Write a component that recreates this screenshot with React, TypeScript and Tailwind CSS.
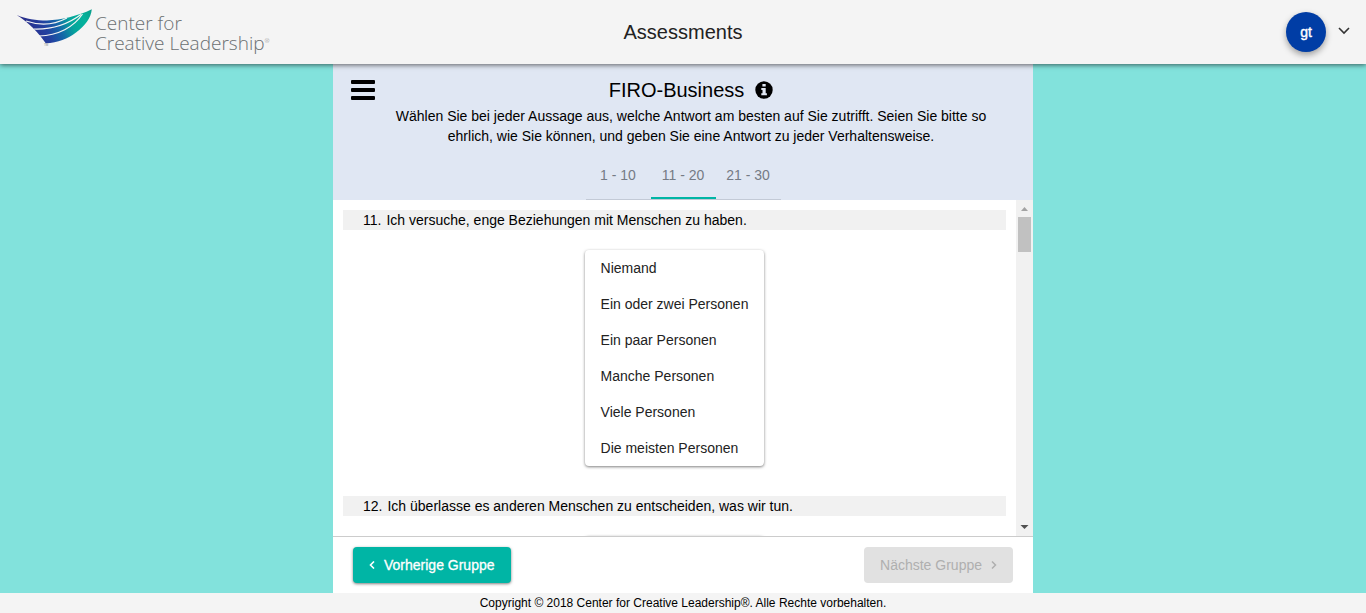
import { useState } from "react";

const groups = ["1 - 10", "11 - 20", "21 - 30"];

const options = [
  "Niemand",
  "Ein oder zwei Personen",
  "Ein paar Personen",
  "Manche Personen",
  "Viele Personen",
  "Die meisten Personen",
];

const questions = [
  { id: 11, text: "Ich versuche, enge Beziehungen mit Menschen zu haben." },
  { id: 12, text: "Ich überlasse es anderen Menschen zu entscheiden, was wir tun." },
];

function Logo() {
  return (
    <a href="#" className="flex items-start gap-[3px] text-[#6b7072]">
      <svg width="76" height="38" viewBox="0 0 76 38" aria-hidden="true" className="overflow-visible">
        <defs>
          <linearGradient id="wing" x1="0" y1="0.2" x2="1" y2="0">
            <stop offset="0" stopColor="#2b2a86" />
            <stop offset="0.3" stopColor="#2340a0" />
            <stop offset="0.48" stopColor="#1467a8" />
            <stop offset="0.66" stopColor="#05a59c" />
            <stop offset="0.85" stopColor="#04b39c" />
            <stop offset="1" stopColor="#0a9c8a" />
          </linearGradient>
        </defs>
        <path
          fill="url(#wing)"
          d="M0.700 6 C10 10 20 11.500 31 11.500 C45 11 62 7 75.800 0.300 C75 9 69 17 60 23.500 C52 29.500 42 33.800 29.700 34.300 C23 24 13 14 0.700 6Z"
        />
        <g fill="none" stroke="#f4f4f4">
          <path strokeWidth="1.100" d="M10 12 C23 16.500 38 16 51 9" />
          <path strokeWidth="1.200" d="M18 20 C35 20.500 51 16 65 5.500" />
          <path strokeWidth="1.200" d="M23 27 C42 26.500 58 18 66.500 5" />
        </g>
        <text x="28" y="37" fontSize="3" fill="#8a8a8a" fontFamily="Liberation Sans, sans-serif">TM</text>
      </svg>
      <span className="flex flex-col pt-1 font-['Open_Sans',sans-serif] text-[19px] leading-5 font-light">
        <span>Center for</span>
        <span className="flex">
          Creative Leadership<span className="text-[6px] leading-4">®</span>
        </span>
      </span>
    </a>
  );
}

function InfoIcon() {
  return (
    <svg width="18" height="18" viewBox="0 0 18 18" aria-hidden="true">
      <circle cx="9" cy="9" r="8.700" fill="#000" />
      <path fill="#e0e7f3" d="M7.400 3h3.300v2.500H7.400zM6.300 7h4.400v5.300h1.200v2H6.300v-2h1.200V9H6.300z" />
    </svg>
  );
}

function ScrollRail() {
  return (
    <div aria-hidden="true" className="flex w-[17px] shrink-0 flex-col items-center bg-[#f1f1f1]">
      <svg width="17" height="17" viewBox="0 0 17 17">
        <path d="M5 11h7L8.500 7z" fill="#a3a3a3" />
      </svg>
      <div className="h-[35px] w-[13px] bg-[#c1c1c1]" />
      <svg width="17" height="17" viewBox="0 0 17 17" className="mt-auto">
        <path d="M4.500 6h8L8.500 10z" fill="#505050" />
      </svg>
    </div>
  );
}

export default function App() {
  const [group, setGroup] = useState(1);
  const [answers, setAnswers] = useState<Record<number, number>>({});

  return (
    <div className="flex h-screen min-h-96 flex-col bg-[#82e2dc] font-['Liberation_Sans',Arial,sans-serif] text-sm leading-5 text-black">
      <header className="relative z-10 grid h-16 shrink-0 grid-cols-3 bg-[#f4f4f4] shadow-[0_1px_5px_rgba(0,0,0,0.6)]">
        <div className="pt-[9px] pl-4">
          <Logo />
        </div>
        <h1 className="self-center text-center text-xl text-[#222]">Assessments</h1>
        <div className="flex items-center justify-end gap-3 pr-4">
          <span className="flex size-10 items-center justify-center rounded-full bg-[#003da5] text-sm text-white shadow-[0_3px_6px_rgba(0,0,0,0.35)] [-webkit-text-stroke:0.4px_white]">
            gt
          </span>
          <button type="button" aria-label="Konto" className="pb-0.5">
            <svg width="12" height="8" viewBox="0 0 12 8" fill="none" stroke="#333" strokeWidth="1.600" aria-hidden="true">
              <path d="M1 1l5 5 5-5" />
            </svg>
          </button>
        </div>
      </header>

      <main className="mx-auto flex min-h-0 w-full max-w-[700px] flex-1 flex-col bg-white">
        <section className="flex shrink-0 bg-[#e0e7f3]">
          <button type="button" aria-label="Menü" className="mt-4 ml-[18px] flex h-5 w-6 flex-col justify-between">
            <span className="h-1 w-full rounded-[1px] bg-black" />
            <span className="h-1 w-full rounded-[1px] bg-black" />
            <span className="h-1 w-full rounded-[1px] bg-black" />
          </button>
          <div className="mr-[42px] flex flex-1 flex-col items-center pt-4">
            <h2 className="flex items-center gap-[11px] pl-4 text-xl leading-5">
              FIRO-Business
              <button type="button" aria-label="Information">
                <InfoIcon />
              </button>
            </h2>
            <p className="max-w-[616px] pt-1.5 pl-4 text-center">
              Wählen Sie bei jeder Aussage aus, welche Antwort am besten auf Sie zutrifft. Seien Sie bitte so
              ehrlich, wie Sie können, und geben Sie eine Antwort zu jeder Verhaltensweise.
            </p>
            <nav className="mt-[5px] flex h-[49px] border-b border-[#c3cad6] text-[#757b85]">
              {groups.map((label, i) => (
                <button
                  key={label}
                  type="button"
                  onClick={() => setGroup(i)}
                  className={
                    i === group
                      ? "w-[65px] border-b-2 border-[#00b5a5] pt-0.5"
                      : "w-[65px] border-b-2 border-transparent pt-0.5"
                  }
                >
                  {label}
                </button>
              ))}
            </nav>
          </div>
        </section>

        <section className="flex min-h-0 flex-1">
          <div className="min-w-0 flex-1 overflow-y-auto p-2.5 [scrollbar-width:none]">
            {questions.map((q) => (
              <article key={q.id} className="mb-[30px]">
                <h3 className="flex gap-[5px] bg-[#f1f1f1] pl-5">
                  <span>{q.id}.</span>
                  <span>{q.text}</span>
                </h3>
                <div className="mx-auto mt-5 flex w-fit flex-col rounded-sm bg-white shadow-[0_1px_3px_rgba(0,0,0,0.5)]">
                  {options.map((option, i) => (
                    <button
                      key={option}
                      type="button"
                      onClick={() => setAnswers({ ...answers, [q.id]: i })}
                      className={
                        answers[q.id] === i
                          ? "h-9 bg-[#d9f4f2] px-4 text-left text-[#222]"
                          : "h-9 px-4 text-left text-[#222]"
                      }
                    >
                      {option}
                    </button>
                  ))}
                </div>
              </article>
            ))}
          </div>
          <ScrollRail />
        </section>

        <div className="flex shrink-0 justify-between border-t border-[#ccc] px-5 py-2.5">
          <button
            type="button"
            className="flex h-9 items-center gap-[9px] rounded-sm bg-[#00b5a5] px-4 text-white shadow-[0_1px_3px_rgba(0,0,0,0.5)] [-webkit-text-stroke:0.3px_white]"
          >
            <svg width="6" height="8" viewBox="0 0 6 8" fill="none" stroke="currentColor" strokeWidth="1.600" aria-hidden="true">
              <path d="M5 0.500L1.500 4L5 7.500" />
            </svg>
            Vorherige Gruppe
          </button>
          <button type="button" disabled className="flex h-9 items-center gap-[9px] rounded-sm bg-[#e1e1e1] px-4 text-[#afafaf]">
            Nächste Gruppe
            <svg width="6" height="8" viewBox="0 0 6 8" fill="none" stroke="currentColor" strokeWidth="1.500" aria-hidden="true">
              <path d="M1 0.500L4.500 4L1 7.500" />
            </svg>
          </button>
        </div>
      </main>

      <footer className="shrink-0 bg-[#f4f4f4] text-center text-xs leading-5">
        Copyright © 2018 Center for Creative Leadership®. Alle Rechte vorbehalten.
      </footer>
    </div>
  );
}
